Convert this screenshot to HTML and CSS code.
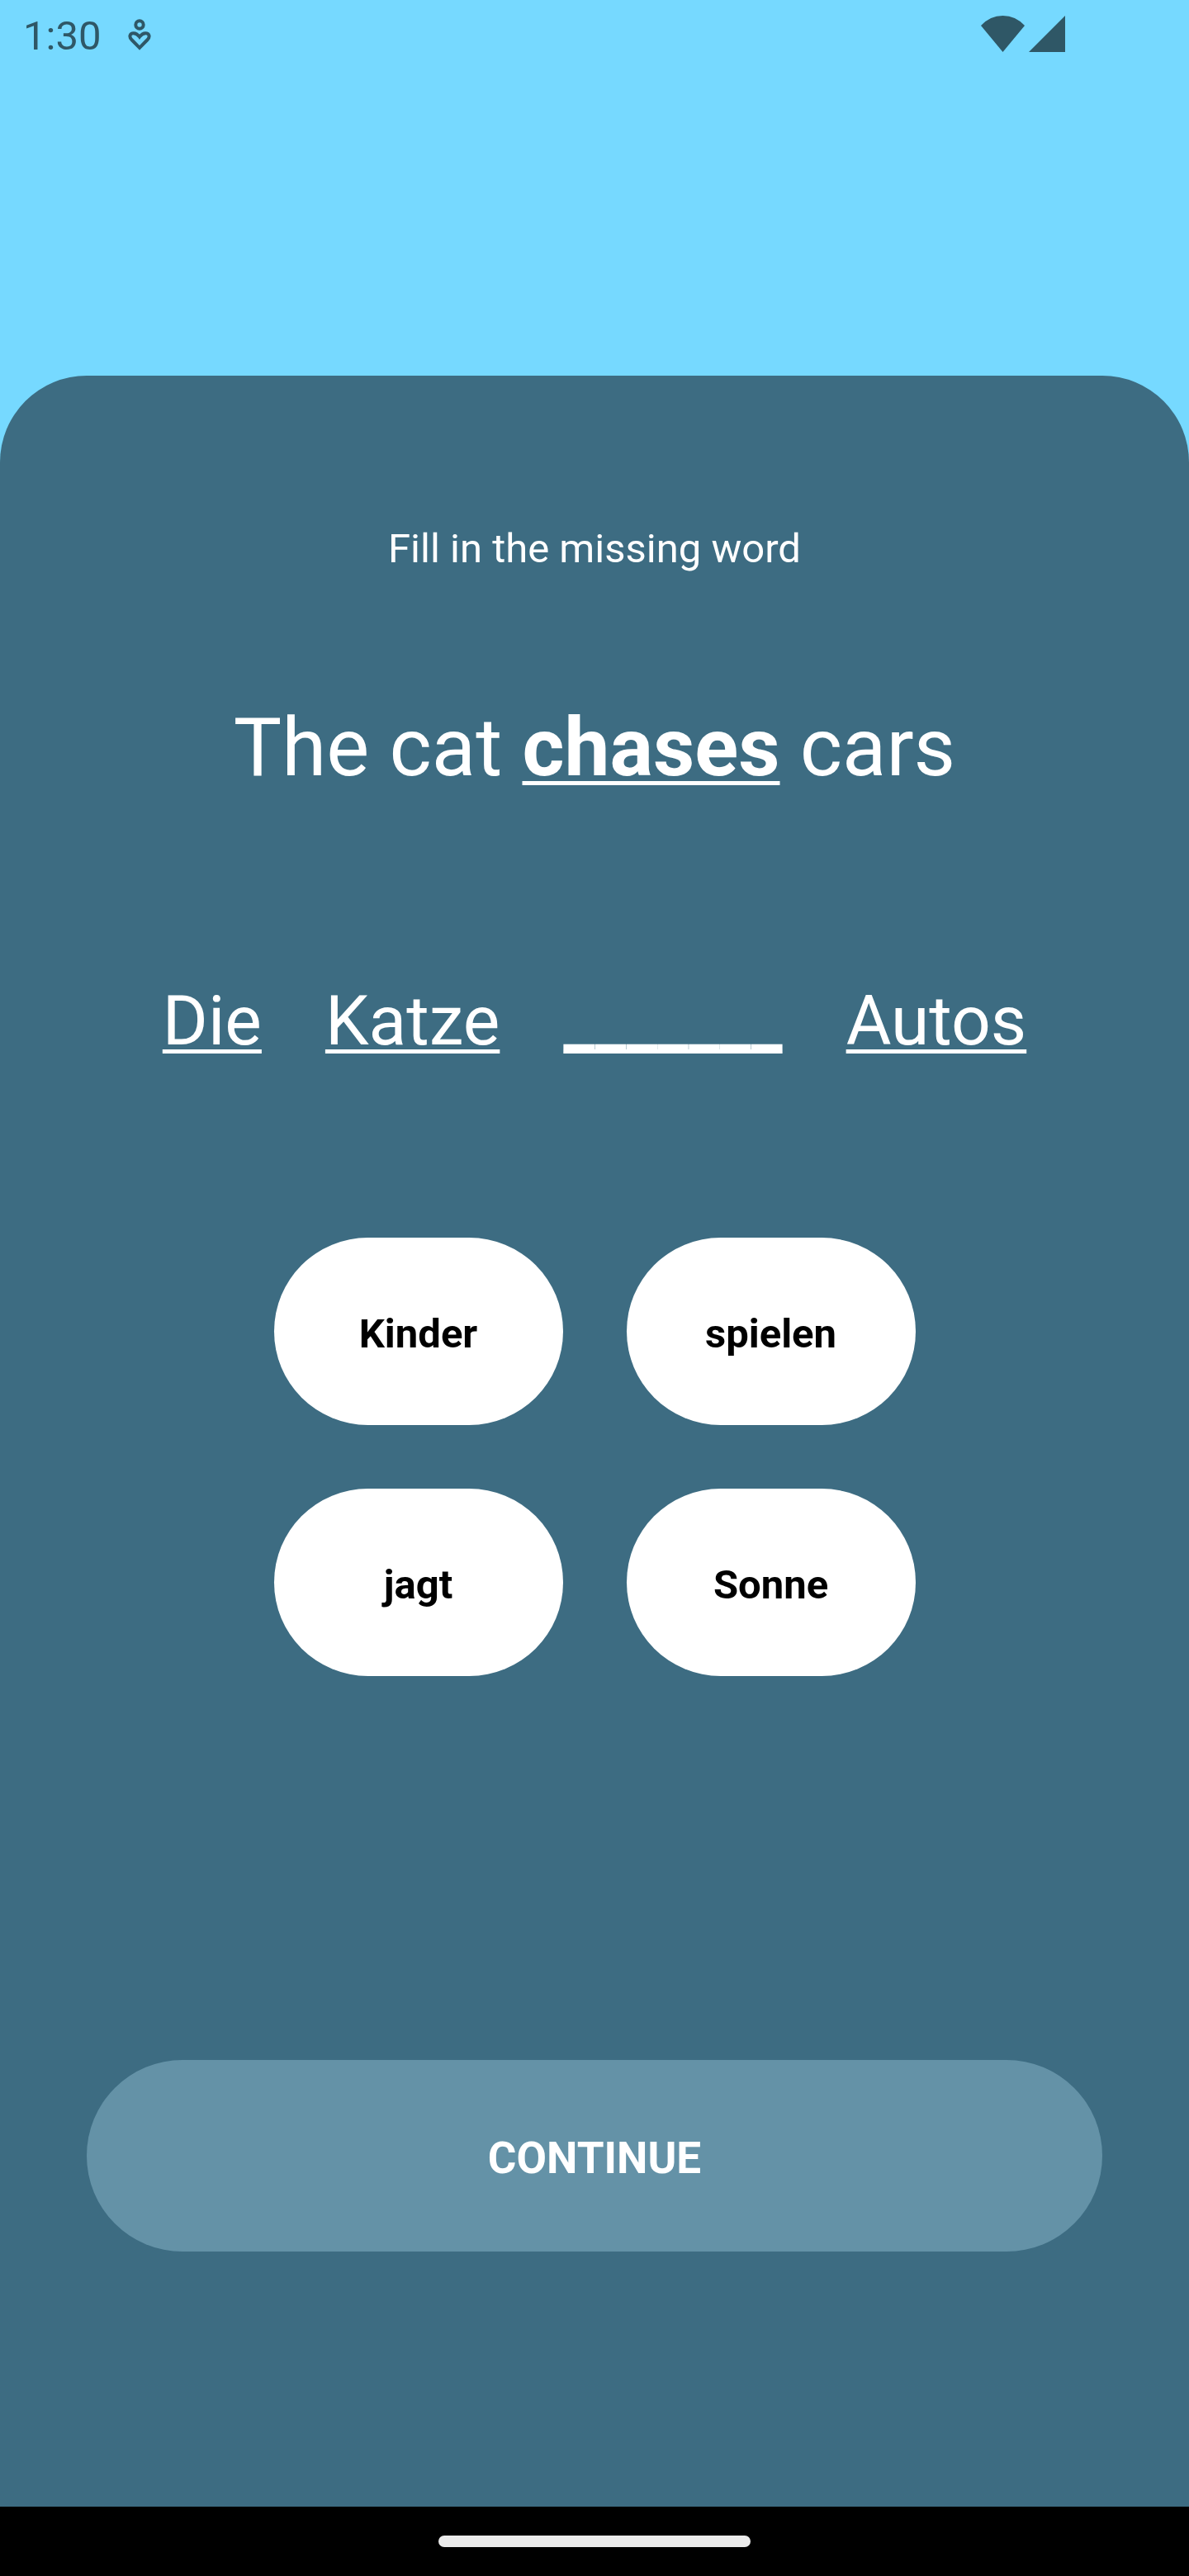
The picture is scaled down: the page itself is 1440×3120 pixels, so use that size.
FILE: index.html
```html
<!DOCTYPE html>
<html lang="en">
<head>
  <meta charset="utf-8">
  <meta name="viewport" content="width=device-width, initial-scale=1">
  <title>Fill in the missing word</title>
  <link rel="stylesheet" href="styles.css">
</head>
<body>
  <div class="screen">
    <header class="status-bar">
      <time class="clock">1:30</time>
      <svg class="wellbeing-icon" viewBox="0 0 28 40" aria-hidden="true">
        <circle cx="14" cy="8" r="4.700" />
        <path d="M14 35.8 L4.3 26 C1 22.400 2.2 18.2 6.800 18.2 C10 18.2 12 20 14 22.600 C16 20 18 18.2 21.200 18.2 C25.800 18.2 27 22.400 23.7 26 Z" />
      </svg>
      <div class="signals">
        <svg class="wifi-icon" viewBox="0 0 53 44" aria-hidden="true"><path d="M0 12 Q11 0 26.500 0 Q42 0 53 12 L26.500 44 Z" /></svg>
        <svg class="cell-icon" viewBox="0 0 44 44" aria-hidden="true"><path d="M44 0 V44 H0 Z" /></svg>
      </div>
    </header>

    <main class="sheet">
      <p class="instruction">Fill in the missing word</p>
      <h1 class="sentence">The cat <strong class="highlight">chases</strong> cars</h1>
      <p class="translation" lang="de">
        <span>Die</span>
        <span>Katze</span>
        <span>_______</span>
        <span>Autos</span>
      </p>
      <div class="choices" lang="de">
        <button class="choice" type="button">Kinder</button>
        <button class="choice" type="button">spielen</button>
        <button class="choice" type="button">jagt</button>
        <button class="choice" type="button">Sonne</button>
      </div>
      <button class="continue" type="button">CONTINUE</button>
    </main>

    <footer class="nav-bar"><div class="nav-handle"></div></footer>
  </div>
</body>
</html>
```

FILE: styles.css
```css
* {
  box-sizing: border-box;
}

body {
  margin: 0;
  font-family: Roboto, "Liberation Sans", sans-serif;
  font-size: 49px;
  line-height: 58px;
  color: #ffffff;
  background: #76d9ff;
}

.screen {
  display: flex;
  flex-direction: column;
  min-height: 100vh;
}

.status-bar {
  display: flex;
  align-items: flex-start;
  padding: 15px 150px 0 28px;
  margin-bottom: 382px;
  color: #2f5766;
}

.wellbeing-icon {
  width: 28px;
  height: 40px;
  margin: 7px 0 0 33px;
  fill: none;
  stroke: currentColor;
  stroke-width: 4;
}

.signals {
  display: flex;
  gap: 5px;
  margin: 4px 0 0 auto;
  fill: currentColor;
}

.wifi-icon {
  width: 53px;
  height: 44px;
}

.cell-icon {
  width: 44px;
  height: 44px;
}

.sheet {
  flex: 1;
  display: flex;
  flex-direction: column;
  align-items: center;
  padding: 181px 105px 309px;
  border-radius: 105px 105px 0 0;
  background: #3d6c82;
}

.instruction {
  margin: 0 0 154px;
}

.sentence {
  margin: 0 0 224px;
  font-size: 98px;
  line-height: 116px;
  font-weight: 400;
  text-align: center;
}

.highlight {
  font-weight: 700;
  text-decoration: underline 5px;
  text-underline-offset: 7px;
  text-decoration-skip-ink: none;
}

.translation {
  display: flex;
  flex-wrap: wrap;
  justify-content: center;
  gap: 77px;
  margin: 0 0 213px;
  font-size: 84px;
  line-height: 98px;
  text-decoration-skip-ink: none;
}

.translation span {
  text-decoration: underline 5px;
  text-underline-offset: 6px;
}

.choices {
  display: grid;
  grid-template-columns: repeat(2, 350px);
  gap: 77px;
  margin-bottom: 77px;
}

.choice,
.continue {
  padding: 6px 0 0;
  border: 0;
  border-radius: 116px;
  font: inherit;
  font-weight: 700;
  cursor: pointer;
}

.choice {
  height: 227px;
  color: #000000;
  background: #ffffff;
}

.continue {
  width: 100%;
  height: 232px;
  margin-top: auto;
  font-size: 53px;
  color: #ffffff;
  background: #6492a7;
}

.nav-bar {
  display: flex;
  justify-content: center;
  padding: 35px 0;
  background: #000000;
}

.nav-handle {
  width: 378px;
  height: 14px;
  border-radius: 7px;
  background: #ebebeb;
}
```
